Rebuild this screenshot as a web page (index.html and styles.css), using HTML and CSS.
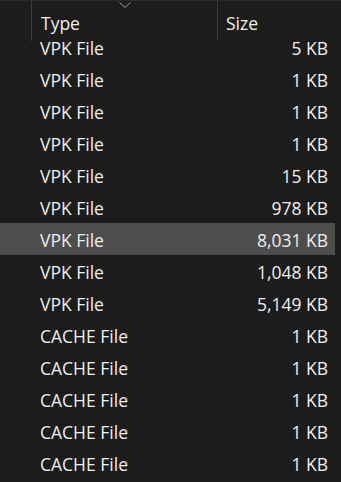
FILE: index.html
```
<!DOCTYPE html>
<html>
<head>
<meta charset="utf-8">
<link rel="stylesheet" href="styles.css">
</head>
<body>
<div class="view">
  <div class="list">
    <div class="row"><span class="type">VPK File</span><span class="size">5 KB</span></div>
    <div class="row"><span class="type">VPK File</span><span class="size">1 KB</span></div>
    <div class="row"><span class="type">VPK File</span><span class="size">1 KB</span></div>
    <div class="row"><span class="type">VPK File</span><span class="size">1 KB</span></div>
    <div class="row"><span class="type">VPK File</span><span class="size">15 KB</span></div>
    <div class="row"><span class="type">VPK File</span><span class="size">978 KB</span></div>
    <div class="row selected"><span class="type">VPK File</span><span class="size">8,031 KB</span></div>
    <div class="row"><span class="type">VPK File</span><span class="size">1,048 KB</span></div>
    <div class="row"><span class="type">VPK File</span><span class="size">5,149 KB</span></div>
    <div class="row"><span class="type">CACHE File</span><span class="size">1 KB</span></div>
    <div class="row"><span class="type">CACHE File</span><span class="size">1 KB</span></div>
    <div class="row"><span class="type">CACHE File</span><span class="size">1 KB</span></div>
    <div class="row"><span class="type">CACHE File</span><span class="size">1 KB</span></div>
    <div class="row"><span class="type">CACHE File</span><span class="size">1 KB</span></div>
  </div>
  <div class="header">
    <div class="col-lead"></div>
    <div class="col col-type">Type
      <svg class="sort" width="12" height="6" viewBox="0 0 12 6"><path d="M0.5 0.5 L6 5.5 L11.5 0.5" fill="none" stroke="#9a9a9a" stroke-width="1"/></svg>
    </div>
    <div class="col col-size">Size</div>
  </div>
</div>
</body>
</html>
```
FILE: styles.css
```
html, body {
  margin: 0;
  padding: 0;
  background: #1c1c1c;
}
.view {
  position: relative;
  width: 341px;
  height: 482px;
  overflow: hidden;
  background: #1c1c1c;
  font-family: "Segoe UI", "Open Sans", sans-serif;
  font-size: 17.5px;
  color: #eeeeee;
}
.list {
  padding-top: 31px;
}
.row {
  display: flex;
  align-items: center;
  height: 32px;
  width: 335px;
  box-sizing: border-box;
  padding-left: 40px;
  padding-right: 7px;
  padding-top: 1px;
}
.row.selected {
  background: #4d4d4d;
}
.type {
  flex: 1;
}
.size {
  text-align: right;
}
.header {
  position: absolute;
  top: 0;
  left: 0;
  width: 341px;
  height: 41px;
  display: flex;
  background: #1c1c1c;
  border-top: 1px solid #2a2a2a;
  box-sizing: border-box;
}
.col-lead {
  width: 31px;
  border-right: 1px solid #3c3c3c;
}
.col {
  position: relative;
  display: flex;
  align-items: center;
  padding-left: 9px;
  padding-top: 3px;
  box-sizing: border-box;
}
.col-type {
  width: 186px;
  border-right: 1px solid #3c3c3c;
}
.col-size {
  flex: 1;
  padding-left: 8px;
}
.sort {
  position: absolute;
  left: 87px;
  top: 1px;
}
```
